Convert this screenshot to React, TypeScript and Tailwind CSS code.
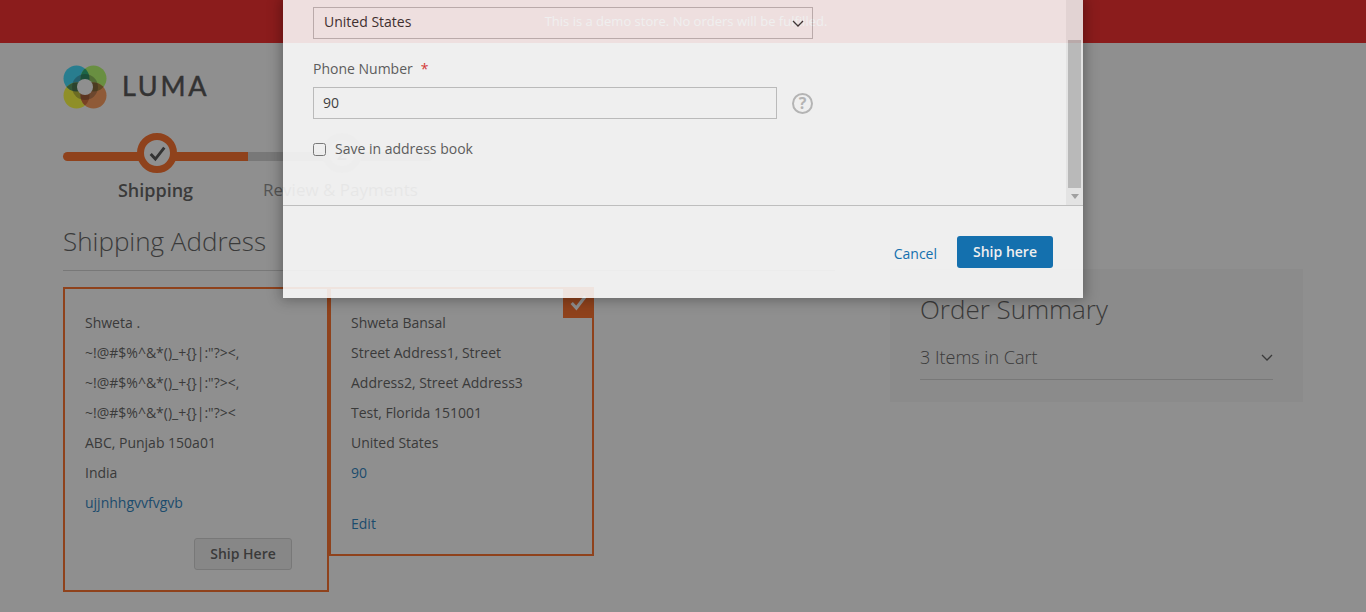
const font = { fontFamily: '"Open Sans", "Noto Sans", sans-serif' };

function Logo() {
  const c = [
    { id: "a", x: 13.5, y: 13.5, f: "#1bd7ff" },
    { id: "b", x: 30.5, y: 13.5, f: "#abff52" },
    { id: "c", x: 13.5, y: 30.5, f: "#ffff1b" },
    { id: "d", x: 30.5, y: 30.5, f: "#ff8a3c" },
  ];
  return (
    <svg width="44" height="44" viewBox="0 0 44 44" className="shrink-0">
      <defs>
        {c.map((k) => (
          <clipPath key={k.id} id={"clip-" + k.id}>
            <circle cx={k.x} cy={k.y} r="13" />
          </clipPath>
        ))}
      </defs>
      {c.map((k) => (
        <circle key={k.id} cx={k.x} cy={k.y} r="13" fill={k.f} />
      ))}
      <circle cx="30.5" cy="13.5" r="13" fill="#00a05d" clipPath="url(#clip-a)" />
      <circle cx="13.5" cy="30.5" r="13" fill="#317f3c" clipPath="url(#clip-a)" />
      <circle cx="30.5" cy="30.5" r="13" fill="#cc5210" clipPath="url(#clip-c)" />
      <circle cx="30.5" cy="30.5" r="13" fill="#956810" clipPath="url(#clip-b)" />
      <circle cx="22" cy="22" r="13" fill="#000" fillOpacity="0.3" />
      <circle cx="22" cy="22" r="8" fill="#fff" />
    </svg>
  );
}

function Chevron({ className }: { className: string }) {
  return (
    <svg viewBox="0 0 12 7" className={className} fill="none" stroke="currentColor" strokeWidth="1.3">
      <path d="M1 1l5 5 5-5" />
    </svg>
  );
}

function AddressLine({ children, link }: { children: React.ReactNode; link?: boolean }) {
  return <div className={link ? "h-[30px] leading-[30px] text-[#006bb4]" : "h-[30px] leading-[30px]"}>{children}</div>;
}

export default function App() {
  return (
    <div className="relative h-[612px] overflow-hidden bg-white text-[14px] text-[#444]" style={font}>
      <div className="flex h-[43px] items-center justify-center bg-[#f60000] pl-[6px] text-[13px] text-white">
        This is a demo store. No orders will be fulfilled.
      </div>

      <div className="px-[63px]">
        <div className="mt-[22px] flex h-[44px] items-center gap-[15px]">
          <Logo />
          <span
            className="-translate-y-px text-[27px] tracking-[2.7px] text-[#333] [-webkit-text-stroke:0.5px_#333]"
            style={{ fontFamily: "Lato, sans-serif" }}
          >
            LUMA
          </span>
        </div>

        <div className="mt-[24px] flex h-[78px] w-[370px]">
          <div className="relative h-[78px] w-[185px]">
            <div className="absolute left-0 top-[19px] h-[9px] w-full rounded-l-[5px] bg-[#ff5501]" />
            <div className="absolute left-[74px] top-0 flex h-[40px] w-[40px] items-center justify-center rounded-full border-[7px] border-[#ff5501] bg-white">
              <svg viewBox="0 0 20 20" className="h-[17px] w-[17px]" fill="none" stroke="#333" strokeWidth="3.4">
                <path d="M2 10.5l5.5 6L18 3" />
              </svg>
            </div>
            <div className="absolute inset-x-0 top-[43px] text-center text-[18px] font-semibold leading-[28px]">Shipping</div>
          </div>
          <div className="relative h-[78px] w-[185px]">
            <div className="absolute left-0 top-[19px] h-[9px] w-full rounded-r-[5px] bg-[#cdcdcd]" />
            <div className="absolute left-[74px] top-0 flex h-[40px] w-[40px] items-center justify-center rounded-full border-[7px] border-[#ececec] bg-white text-[18px] font-semibold text-[#999]">
              2
            </div>
            <div className="absolute inset-x-0 top-[43px] whitespace-nowrap text-center text-[17px] leading-[28px] text-[#7d7d7d]">
              Review &amp; Payments
            </div>
          </div>
        </div>

        <div className="flex items-start justify-between">
          <div className="w-[772px]">
            <div className="mt-[13px] h-[47px] border-b border-[#ccc] text-[26px] font-light leading-[34px]">
              Shipping Address
            </div>
            <div className="mt-[16px] flex items-start">
              <div className="h-[305px] w-[266px] border-2 border-[#ff5501] pl-[20px] pt-[19px]">
                <AddressLine>Shweta .</AddressLine>
                <AddressLine>{'~!@#$%^&*()_+{}|:"?><,'}</AddressLine>
                <AddressLine>{'~!@#$%^&*()_+{}|:"?><,'}</AddressLine>
                <AddressLine>{'~!@#$%^&*()_+{}|:"?><'}</AddressLine>
                <AddressLine>ABC, Punjab 150a01</AddressLine>
                <AddressLine>India</AddressLine>
                <AddressLine link>ujjnhhgvvfvgvb</AddressLine>
                <div className="mt-[20px] flex justify-end pr-[35px]">
                  <button className="h-[32px] w-[98px] rounded-[3px] border border-[#ccc] bg-[#eee] pb-[2px] text-[14px] font-semibold text-[#444]">
                    Ship Here
                  </button>
                </div>
              </div>
              <div className="relative h-[269px] w-[265px] border-2 border-[#ff5501] pl-[20px] pt-[19px]">
                <div className="absolute right-[-2px] top-[-2px] flex h-[31px] w-[31px] items-center justify-center bg-[#ff5501]">
                  <svg viewBox="0 0 20 20" className="h-[17px] w-[17px]" fill="none" stroke="#fff" strokeWidth="3.6">
                    <path d="M2 10.5l5.5 6L18 3" />
                  </svg>
                </div>
                <AddressLine>Shweta Bansal</AddressLine>
                <AddressLine>Street Address1, Street</AddressLine>
                <AddressLine>Address2, Street Address3</AddressLine>
                <AddressLine>Test, Florida 151001</AddressLine>
                <AddressLine>United States</AddressLine>
                <AddressLine link>90</AddressLine>
                <div className="mt-[21px] leading-[30px] text-[#006bb4]">Edit</div>
              </div>
            </div>
          </div>

          <div className="mt-[58px] h-[133px] w-[413px] bg-[#f5f5f5] px-[30px] pt-[22px]">
            <div className="text-[26px] font-light leading-[36px]">Order Summary</div>
            <div className="mt-[14px] flex h-[39px] items-center justify-between border-b border-[#ccc] pb-[6px]">
              <span className="text-[18px] font-light">3 Items in Cart</span>
              <Chevron className="h-[7px] w-[12px]" />
            </div>
          </div>
        </div>
      </div>

      <div className="absolute inset-0 bg-[rgba(51,51,51,0.55)]" />

      <div className="absolute left-[283px] top-0 h-[298px] w-[800px] bg-white opacity-[0.86] shadow-[0_0_12px_2px_rgba(0,0,0,0.35)]">
        <div className="flex h-[206px] border-b border-[#c6c6c6]">
          <div className="w-[783px] pl-[30px] pt-[7px]">
            <div className="flex h-[32px] w-[500px] items-center justify-between border border-[#c2c2c2] pb-[4px] pl-[10px] pr-[8px] text-[#333]">
              <span>United States</span>
              <Chevron className="mt-[4px] h-[7px] w-[12px]" />
            </div>
            <div className="mt-[20px] leading-[20px] text-[#555]">
              <span>Phone Number</span>
              <span className="ml-[8px] text-[#e02b27]">*</span>
            </div>
            <div className="mt-[8px] flex items-center gap-[15px]">
              <div className="flex h-[32px] w-[464px] items-center border border-[#c2c2c2] pb-[2px] pl-[9px] text-[#333]">90</div>
              <div className="flex h-[21px] w-[21px] items-center justify-center rounded-full border-2 border-[#bbb] text-[16px] font-bold leading-none text-[#bbb]">
                ?
              </div>
            </div>
            <label className="mt-[20px] flex items-center gap-[9px] leading-[20px] text-[#555]">
              <input type="checkbox" className="m-0 h-[13px] w-[13px]" />
              <span>Save in address book</span>
            </label>
          </div>
          <div className="flex w-[17px] flex-col bg-[#f1f1f1]">
            <div className="ml-[2px] mt-[40px] h-[148px] w-[13px] bg-[#c1c1c1]" />
            <div className="mt-[6px] flex justify-center">
              <div className="h-0 w-0 border-x-[4px] border-t-[5px] border-x-transparent border-t-[#a3a3a3]" />
            </div>
          </div>
        </div>
        <div className="flex items-center justify-end gap-[20px] pr-[30px] pt-[30px]">
          <span className="pt-[3px] text-[#006bb4]">Cancel</span>
          <button className="h-[32px] w-[96px] rounded-[3px] bg-[#006bb4] pb-[2px] text-[14px] font-semibold text-white">Ship here</button>
        </div>
      </div>
    </div>
  );
}
